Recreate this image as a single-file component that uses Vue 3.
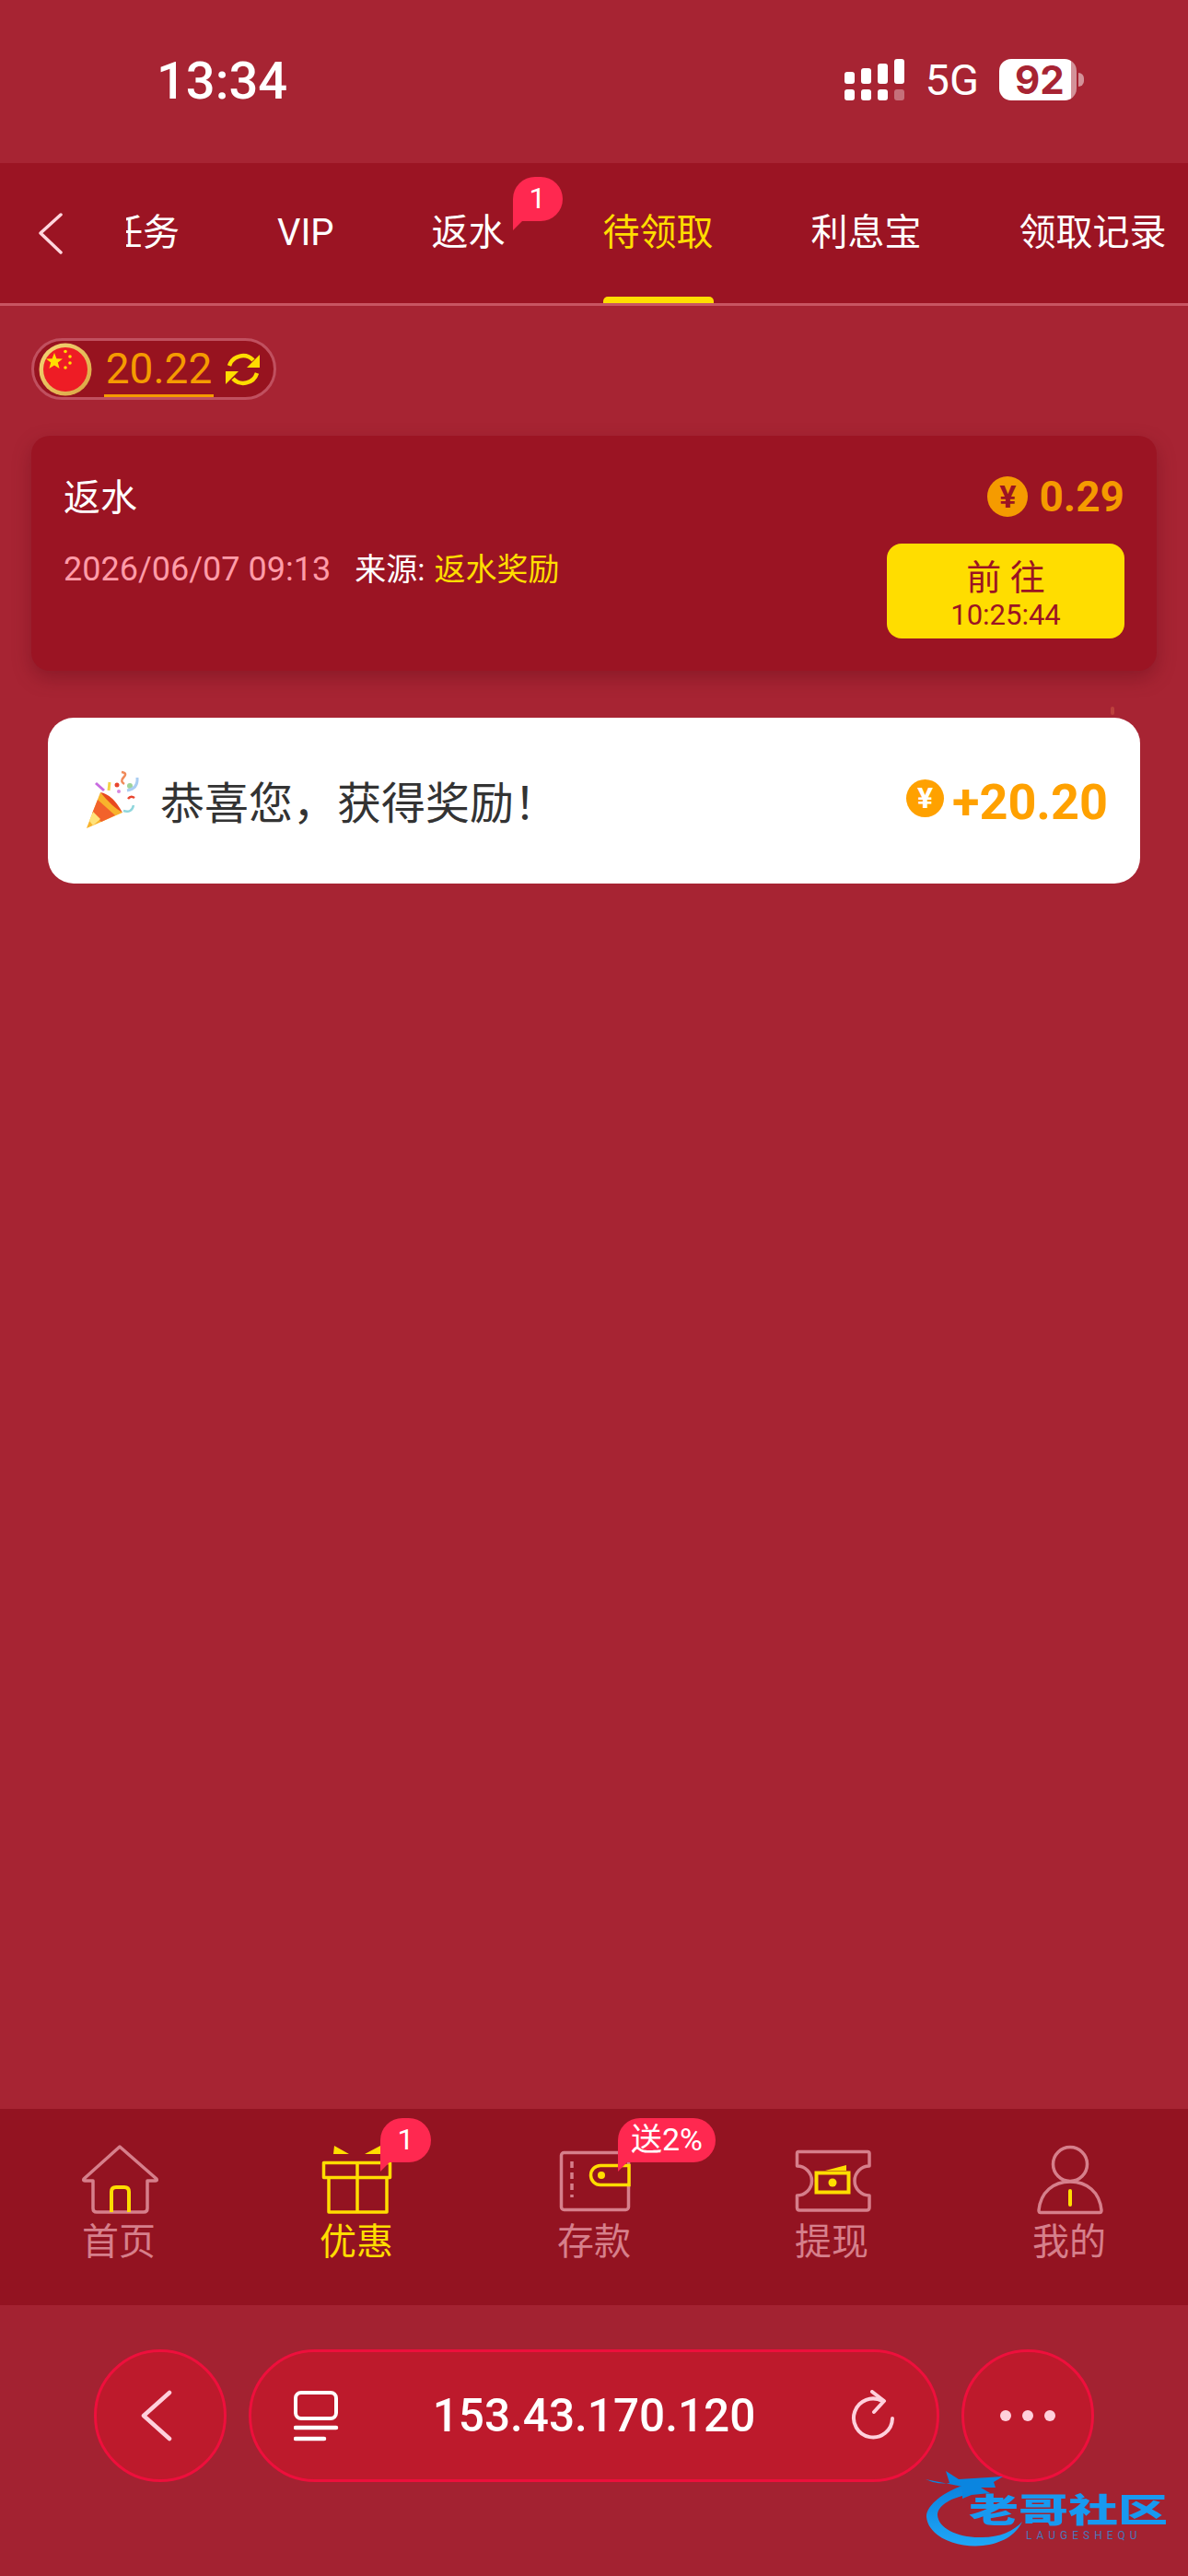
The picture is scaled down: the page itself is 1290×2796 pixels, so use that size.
<script setup>
const tabs = [
  { name: '任务' },
  { name: 'VIP' },
  { name: '返水', badge: '1' },
  { name: '待领取', active: true },
  { name: '利息宝' },
  { name: '领取记录' }
]
const signalTop = [13, 17, 22, 27]
</script>

<template>
  <div class="page">
    <header class="status">
      <span class="time">13:34</span>
      <div class="status-right">
        <div class="signal">
          <div v-for="(h, i) in signalTop" :key="i" class="sig-col">
            <i class="sig-top" :style="{ height: h + 'px' }"></i>
            <i class="sig-bottom" :class="{ faded: i === 3 }"></i>
          </div>
        </div>
        <span class="net">5G</span>
        <div class="battery">
          <div class="batt-body"><span>92</span></div>
          <i class="batt-nub"></i>
        </div>
      </div>
    </header>

    <nav class="topnav">
      <button class="back">
        <svg width="30" height="46" viewBox="0 0 30 46"><path d="M27 3 L5 23 L27 44" fill="none" stroke="#ffd6de" stroke-width="3.5" stroke-linecap="round" stroke-linejoin="round" /></svg>
      </button>
      <div class="tabs">
        <div v-for="t in tabs" :key="t.name" class="tab" :class="{ active: t.active }">
          {{ t.name }}
          <span v-if="t.badge" class="tab-badge">{{ t.badge }}</span>
          <i v-if="t.active" class="indicator"></i>
        </div>
      </div>
    </nav>

    <main class="content">
      <div class="balance">
        <svg class="flag" width="58" height="58" viewBox="0 0 58 58">
          <defs>
            <linearGradient id="ring" x1="0" y1="0" x2="1" y2="1">
              <stop offset="0" stop-color="#f6d877" />
              <stop offset="1" stop-color="#d9a441" />
            </linearGradient>
          </defs>
          <circle cx="29" cy="29" r="28.5" fill="url(#ring)" />
          <circle cx="29" cy="29" r="24" fill="#ee1c25" />
          <polygon points="17,11 19.4,17.2 26,17.5 20.8,21.6 22.6,28 17,24.4 11.4,28 13.2,21.6 8,17.5 14.6,17.2" fill="#ffdd00" />
          <circle cx="29" cy="9.5" r="1.8" fill="#ffdd00" />
          <circle cx="34" cy="15" r="1.8" fill="#ffdd00" />
          <circle cx="34" cy="22" r="1.8" fill="#ffdd00" />
          <circle cx="29" cy="27" r="1.8" fill="#ffdd00" />
        </svg>
        <span class="amount">20.22</span>
        <svg class="refresh" width="38" height="38" viewBox="0 0 38 38">
          <path d="M4 15 A15.5 15.5 0 0 1 30 9" fill="none" stroke="#ffdd00" stroke-width="4.5" />
          <polygon points="37,3 37,17 23,17" fill="#ffdd00" />
          <path d="M34 23 A15.5 15.5 0 0 1 8 29" fill="none" stroke="#ffdd00" stroke-width="4.5" />
          <polygon points="0,21 14,21 0,35" fill="#ffdd00" />
        </svg>
      </div>

      <section class="card">
        <div class="card-top">
          <span class="card-title">返水</span>
          <div class="card-money">
            <span class="coin">¥</span>
            <span class="money">0.29</span>
          </div>
        </div>
        <div class="card-bottom">
          <div class="meta">
            <span class="date">2026/06/07 09:13</span>
            <span class="source">来源:</span>
            <span class="source-val">返水奖励</span>
          </div>
          <button class="go">
            <span class="go-text">前 往</span>
            <span class="go-time">10:25:44</span>
          </button>
        </div>
      </section>

      <div class="toast">
        <svg class="popper" width="62" height="64" viewBox="0 0 62 64">
          <path d="M2 63 L17 24 L41 46 Z" fill="#f8b32c" />
          <path d="M8 47 L14 32 L33 49 L18 56 Z" fill="#f2622b" />
          <path d="M5 55 L9 45 L17 53 L9 60 Z" fill="#ffe27a" />
          <path d="M17 24 Q30 26 41 46 Q30 40 17 24Z" fill="#e8491f" />
          <path d="M12 14 L21 22" stroke="#c86be0" stroke-width="3" fill="none" />
          <path d="M27 13 L26 22" stroke="#f4d34a" stroke-width="3" fill="none" />
          <path d="M40 2 Q47 3 42 8 Q38 12 43 15" stroke="#f08a5a" stroke-width="2.5" fill="none" />
          <circle cx="35" cy="16" r="2.5" fill="#e8452e" />
          <circle cx="49" cy="17" r="3" fill="#9ed39a" />
          <path d="M57 8 Q58 20 46 22" stroke="#a9cdf2" stroke-width="3" fill="none" />
          <circle cx="37" cy="23" r="2" fill="#d78ae0" />
          <path d="M47 31 Q50 27 54 30" stroke="#e8452e" stroke-width="2.5" fill="none" />
          <path d="M42 44 Q51 47 53 38" stroke="#8fd6dc" stroke-width="2.5" fill="none" />
        </svg>
        <span class="toast-text">恭喜您，获得奖励！</span>
        <div class="toast-money">
          <span class="coin coin-light">¥</span>
          <span class="plus">+20.20</span>
        </div>
        <i class="speck"></i>
      </div>
    </main>

    <footer class="tabbar">
      <div class="item">
        <div class="icon">
          <svg width="100" height="80" viewBox="0 0 100 80">
            <path d="M51 5 L12 40 Q11 42 13 42 H22 V72 Q22 76 26 76 H77 Q81 76 81 72 V42 H90 Q92 42 91 40 Z" fill="none" stroke="#d67f8b" stroke-width="3.5" stroke-linejoin="round" />
            <path d="M42 76 V54 Q42 49 47 49 H56 Q61 49 61 54 V76" fill="none" stroke="#ffdd00" stroke-width="4" />
          </svg>
        </div>
        <span class="label">首页</span>
      </div>

      <div class="item on">
        <div class="icon">
          <svg width="100" height="80" viewBox="0 0 100 80">
            <rect x="14.5" y="22.5" width="72" height="16" fill="none" stroke="#ffdd00" stroke-width="3.5" stroke-linejoin="round" />
            <path d="M20 38 V76 H83 V38 M51 22 V76" fill="none" stroke="#ffdd00" stroke-width="3.5" stroke-linejoin="round" />
            <path d="M25 13 L26 4 L42 13 Z M59 13 L76 4 V13 Z" fill="#ffdd00" />
          </svg>
          <span class="bubble num">1</span>
        </div>
        <span class="label">优惠</span>
      </div>

      <div class="item">
        <div class="icon">
          <svg width="100" height="80" viewBox="0 0 100 80">
            <rect x="14.5" y="11.5" width="73" height="62" rx="3" fill="none" stroke="#d67f8b" stroke-width="3.5" />
            <path d="M26 21 V60" stroke="#d67f8b" stroke-width="3.5" stroke-dasharray="7 5" fill="none" />
            <path d="M88 25.5 H57 A10 10 0 0 0 57 46.5 H88 Z" fill="#931321" stroke="#ffdd00" stroke-width="3.5" />
            <circle cx="58" cy="36" r="4" fill="#ffdd00" />
          </svg>
          <span class="bubble promo">送2%</span>
        </div>
        <span class="label">存款</span>
      </div>

      <div class="item">
        <div class="icon">
          <svg width="100" height="80" viewBox="0 0 100 80">
            <path d="M14 10.5 H89 Q91 10.5 91 12.5 V26 A16 16 0 0 0 91 58 V71 Q91 74 88 74 H15 Q12.5 74 12.5 71 V58 A16 16 0 0 0 12.5 26 V12.5 Q12.5 10.5 14 10.5 Z" fill="none" stroke="#d67f8b" stroke-width="3.5" stroke-linejoin="round" />
            <rect x="33.5" y="33.5" width="35" height="21" fill="none" stroke="#ffdd00" stroke-width="4" />
            <circle cx="51" cy="44" r="4.5" fill="#ffdd00" />
            <path d="M43 31 L66 25 V31 Z" fill="#ffdd00" />
          </svg>
        </div>
        <span class="label">提现</span>
      </div>

      <div class="item">
        <div class="icon">
          <svg width="100" height="80" viewBox="0 0 100 80">
            <ellipse cx="51" cy="24" rx="18.5" ry="18.5" fill="none" stroke="#d67f8b" stroke-width="3.5" />
            <path d="M17 74 C19 54 33 43 51 43 C69 43 83 54 85 74 Q85 76.5 83 76.5 H19 Q17 76.5 17 74 Z" fill="none" stroke="#d67f8b" stroke-width="3.5" />
            <path d="M51 53 V68" stroke="#ffdd00" stroke-width="4" stroke-linecap="round" />
          </svg>
        </div>
        <span class="label">我的</span>
      </div>
    </footer>

    <div class="browser">
      <button class="round">
        <svg width="34" height="56" viewBox="0 0 34 56"><path d="M31 3 L3 28 L31 53" fill="none" stroke="#ffd0dc" stroke-width="4.5" stroke-linecap="round" stroke-linejoin="round" /></svg>
      </button>
      <div class="url">
        <svg width="50" height="56" viewBox="0 0 50 56">
          <rect x="2" y="3" width="44" height="28" rx="6" fill="none" stroke="#fff" stroke-width="4" />
          <path d="M2 41 H46 M2 53 H33" stroke="#fff" stroke-width="4.5" stroke-linecap="round" fill="none" />
        </svg>
        <span class="url-text">153.43.170.120</span>
        <svg width="50" height="56" viewBox="0 0 50 56">
          <path d="M48 31 A21 21 0 1 1 37 12" fill="none" stroke="#ffd0dc" stroke-width="4" stroke-linecap="round" />
          <path d="M26 2 L39 12 L28 24" fill="none" stroke="#ffd0dc" stroke-width="4" stroke-linecap="round" stroke-linejoin="round" />
        </svg>
      </div>
      <button class="round">
        <svg width="64" height="16" viewBox="0 0 64 16">
          <circle cx="8" cy="8" r="6" fill="#ffd0dc" />
          <circle cx="32" cy="8" r="6" fill="#ffd0dc" />
          <circle cx="56" cy="8" r="6" fill="#ffd0dc" />
        </svg>
      </button>
    </div>

    <div class="watermark">
      <svg class="dragon" width="110" height="84" viewBox="0 0 110 84">
        <defs>
          <linearGradient id="wm" x1="0" y1="0" x2="0" y2="1">
            <stop offset="0" stop-color="#0a82de" />
            <stop offset="1" stop-color="#20a6f6" />
          </linearGradient>
        </defs>
        <path d="M45 14 C15 24 0 40 1 50 C3 72 36 84 62 81 C82 79 98 70 105 55 C95 66 78 73 58 72 C34 72 14 62 13 48 C13 38 26 30 44 26 Z" fill="url(#wm)" />
        <path d="M0 9 Q12 15 26 13 L22 0 L36 9 L84 6 L74 12 L76 18 L60 18 L70 24 L50 26 L40 30 L40 17 Z" fill="#0a85e0" />
      </svg>
      <span class="wm-title">老哥社区</span>
      <span class="wm-sub">LAUGESHEQU</span>
    </div>
  </div>
</template>

<style scoped>
.page {
  position: relative;
  width: 1290px;
  height: 2796px;
  display: flex;
  flex-direction: column;
  overflow: hidden;
  background: #a72433;
  font-family: Roboto, "Noto Sans CJK SC", sans-serif;
  color: #fff;
}
button {
  border: 0;
  padding: 0;
  font-family: inherit;
}

/* status bar */
.status {
  height: 177px;
  flex: none;
  display: flex;
  justify-content: space-between;
  padding: 64px 113px 0 170px;
  box-sizing: border-box;
}
.time {
  font-size: 56px;
  font-weight: 500;
  line-height: 48px;
}
.status-right {
  display: flex;
  align-items: flex-start;
  height: 45px;
}
.signal {
  display: flex;
  gap: 7px;
  height: 45px;
  margin-right: 23px;
}
.sig-col {
  width: 11px;
  display: flex;
  flex-direction: column;
  justify-content: flex-end;
  gap: 6px;
}
.sig-top,
.sig-bottom {
  display: block;
  width: 11px;
  border-radius: 3px;
  background: #fff;
}
.sig-bottom {
  height: 12px;
}
.faded {
  opacity: 0.35;
}
.net {
  font-size: 47px;
  line-height: 46px;
  margin-right: 22px;
  font-family: Roboto, sans-serif;
}
.battery {
  display: flex;
  align-items: center;
  height: 45px;
}
.batt-body {
  width: 84px;
  height: 45px;
  box-sizing: border-box;
  border-radius: 13px;
  background: linear-gradient(to right, #fff 93%, rgba(255, 255, 255, 0.5) 93%);
  color: #a72433;
  font-size: 42px;
  font-weight: 700;
  line-height: 45px;
  padding-left: 17px;
  font-family: Inter, sans-serif;
}
.batt-nub {
  width: 6px;
  height: 15px;
  margin-left: 2px;
  border-radius: 0 8px 8px 0;
  background: rgba(255, 255, 255, 0.5);
}

/* top tabs */
.topnav {
  flex: none;
  height: 155px;
  box-sizing: border-box;
  border-bottom: 3px solid #c85562;
  background: #9b1423;
  display: flex;
  align-items: stretch;
}
.back {
  width: 137px;
  flex: none;
  background: none;
  display: flex;
  padding: 53px 0 0 39px;
  box-sizing: border-box;
}
.tabs {
  flex: 1;
  min-width: 0;
  display: flex;
  gap: 106px;
  overflow: hidden;
}
.tab {
  position: relative;
  flex: none;
  height: 152px;
  line-height: 151px;
  font-size: 40px;
  color: #fff;
  white-space: nowrap;
}
.tab:first-child {
  margin-left: -22px;
}
.tab.active {
  color: #ffdd00;
}
.indicator {
  position: absolute;
  left: 0;
  right: 0;
  bottom: 0;
  height: 7px;
  border-radius: 5px 5px 0 0;
  background: #ffdd00;
}
.tab-badge {
  position: absolute;
  left: 88px;
  top: 15px;
  width: 54px;
  height: 48px;
  border-radius: 24px 24px 24px 0;
  background: #ff2850;
  color: #fff;
  font-size: 32px;
  line-height: 46px;
  text-align: center;
  font-family: Roboto, sans-serif;
}
.tab-badge::after,
.bubble::after {
  content: "";
  position: absolute;
  left: 0;
  top: 46px;
  border-top: 12px solid #ff2850;
  border-left: 0 solid transparent;
  border-right: 12px solid transparent;
}

/* content */
.content {
  position: relative;
  flex: 1;
  min-height: 0;
  padding: 35px 34px 0;
}
.balance {
  width: 266px;
  height: 67px;
  box-sizing: border-box;
  border: 3px solid #c0505f;
  border-radius: 34px;
  background: #97131f;
  display: flex;
  align-items: center;
  padding-left: 5px;
}
.flag {
  flex: none;
}
.amount {
  margin-left: 13px;
  width: 119px;
  flex: none;
  box-sizing: border-box;
  height: 61px;
  line-height: 60px;
  border-bottom: 3px solid #f59b00;
  color: #f59b00;
  font-size: 46px;
  text-align: center;
}
.refresh {
  margin-left: 13px;
  flex: none;
}

.card {
  margin-top: 39px;
  height: 255px;
  box-sizing: border-box;
  padding: 40px 35px 35px 35px;
  border-radius: 20px;
  background: #9b1423;
  box-shadow: 0 8px 20px rgba(90, 10, 20, 0.35);
}
.card-top {
  height: 50px;
  display: flex;
  justify-content: space-between;
  align-items: center;
}
.card-title {
  font-size: 40px;
  line-height: 50px;
  margin-top: 6px;
}
.card-money {
  display: flex;
  align-items: center;
  gap: 12px;
  margin-top: 2px;
}
.coin {
  width: 44px;
  height: 44px;
  border-radius: 50%;
  background: #f59b00;
  color: #9b1423;
  display: flex;
  align-items: center;
  justify-content: center;
  font-size: 34px;
  font-weight: 700;
}
.money {
  color: #f59b00;
  font-size: 46px;
  font-weight: 700;
  line-height: 50px;
}
.card-bottom {
  margin-top: 27px;
  display: flex;
  justify-content: space-between;
  align-items: flex-start;
}
.meta {
  display: flex;
  line-height: 56px;
  font-size: 34px;
}
.date {
  color: #ff9ba8;
  font-size: 36px;
  margin-right: 26px;
}
.source {
  color: #fff;
  margin-right: 10px;
}
.source-val {
  color: #ffdd00;
}
.go {
  width: 258px;
  height: 103px;
  border-radius: 16px;
  background: #ffdd00;
  color: #9b1423;
  display: flex;
  flex-direction: column;
  align-items: center;
  padding-top: 14px;
  box-sizing: border-box;
}
.go-text {
  font-size: 38px;
  line-height: 46px;
}
.go-time {
  font-size: 31px;
  line-height: 36px;
}

.toast {
  position: absolute;
  left: 52px;
  top: 447px;
  width: 1186px;
  height: 180px;
  box-sizing: border-box;
  padding: 0 35px 0 40px;
  border-radius: 28px;
  background: #fff;
  display: flex;
  align-items: center;
}
.popper {
  flex: none;
  margin-top: -2px;
}
.toast-text {
  margin-left: 20px;
  margin-bottom: 3px;
  color: #333;
  font-size: 48px;
  flex: 1;
}
.toast-money {
  display: flex;
  align-items: center;
  gap: 9px;
  margin-top: 2px;
}
.coin-light {
  width: 41px;
  height: 41px;
  background: #ffa100;
  color: #fff;
  font-size: 32px;
  margin-top: -8px;
}
.plus {
  color: #ffa100;
  font-size: 54px;
  font-weight: 700;
}
.speck {
  position: absolute;
  right: 28px;
  top: -12px;
  width: 4px;
  height: 9px;
  border-radius: 2px;
  background: rgba(230, 120, 80, 0.35);
}

/* bottom tab bar */
.tabbar {
  flex: none;
  height: 213px;
  background: #931321;
  display: grid;
  grid-template-columns: repeat(5, 258px);
}
.item {
  display: flex;
  flex-direction: column;
  align-items: center;
  padding-top: 36px;
  color: #d67f8b;
}
.item.on {
  color: #ffdd00;
}
.icon {
  position: relative;
  width: 100px;
  height: 80px;
}
.icon svg {
  display: block;
}
.label {
  margin-top: 1px;
  font-size: 40px;
  line-height: 56px;
}
.bubble {
  position: absolute;
  top: -26px;
  height: 48px;
  border-radius: 24px 24px 24px 0;
  background: #ff2850;
  color: #fff;
  line-height: 46px;
  text-align: center;
  white-space: nowrap;
}
.bubble.num {
  left: 76px;
  width: 55px;
  font-size: 32px;
}
.bubble.promo {
  left: 76px;
  width: 106px;
  font-size: 34px;
}

/* browser bar */
.browser {
  flex: none;
  height: 294px;
  box-sizing: border-box;
  padding-top: 48px;
  background: #a32231;
  display: flex;
  justify-content: center;
  align-items: flex-start;
  gap: 24px;
}
.round,
.url {
  height: 144px;
  box-sizing: border-box;
  border: 3px solid #ee0f3c;
  border-radius: 72px;
  background: #bd1a2c;
  display: flex;
  align-items: center;
}
.round {
  width: 144px;
  justify-content: center;
}
.round:first-child svg {
  margin-right: 9px;
}
.url {
  width: 750px;
  padding: 0 46px;
  justify-content: space-between;
}
.url-text {
  font-size: 49.5px;
  font-weight: 500;
  color: #fff;
}

/* watermark */
.watermark {
  position: absolute;
  left: 1005px;
  top: 2682px;
  width: 264px;
  height: 84px;
}
.dragon {
  position: absolute;
  left: 0;
  top: 0;
  filter: blur(0.6px);
}
.wm-title {
  position: absolute;
  left: 47px;
  top: 22px;
  width: 218px;
  color: #1899f0;
  font-size: 54px;
  font-weight: 900;
  line-height: 44px;
  white-space: nowrap;
  transform: scaleY(0.68);
}
.wm-sub {
  position: absolute;
  left: 109px;
  top: 65px;
  color: #4a78b8;
  font-size: 12px;
  line-height: 10px;
  letter-spacing: 5px;
  white-space: nowrap;
}
</style>
